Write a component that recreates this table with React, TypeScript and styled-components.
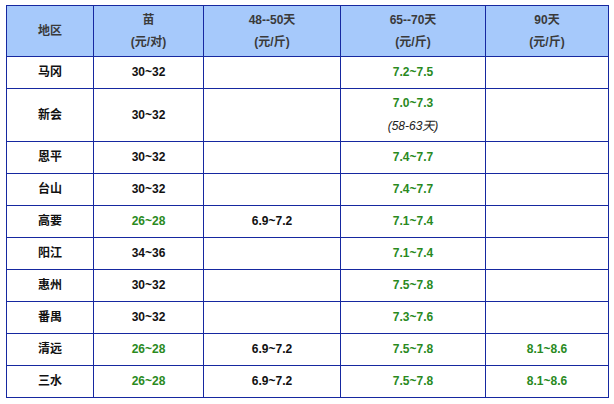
import { createGlobalStyle, styled } from 'styled-components';

const GlobalStyle = createGlobalStyle`
  html, body {
    margin: 0;
    padding: 0;
    background: #ffffff;
  }
  body {
    font-family: 'Liberation Sans', Arial, 'Noto Sans CJK SC', sans-serif;
  }
`;

const Page = styled.div`
  padding: 5px 6px;
`;

const Table = styled.table`
  border-collapse: collapse;
  width: 602px;
  table-layout: fixed;
  font-size: 12px;
  font-weight: bold;
`;

const HeadRow = styled.tr`
  height: 51px;
  background: #a6c9fb;
`;

const Row = styled.tr<{ $tall?: boolean }>`
  height: ${({ $tall }) => ($tall ? '53px' : '32px')};
`;

const HeadCell = styled.th`
  border: 1px solid #1628a0;
  color: #3a3a3a;
  font-weight: bold;
  line-height: 22px;
  text-align: center;
  padding: 0;
`;

const Cell = styled.td<{ $green?: boolean }>`
  border: 1px solid #1628a0;
  color: ${({ $green }) => ($green ? '#2a8a1e' : '#111111')};
  text-align: center;
  line-height: 23px;
  padding: 0;
`;

const Note = styled.span`
  display: block;
  font-style: italic;
  font-weight: normal;
  color: #222222;
`;

type RowData = {
  area: string;
  seed: string;
  seedGreen?: boolean;
  d48?: string;
  d65: string;
  note?: string;
  d90?: string;
};

const rows: RowData[] = [
  { area: '马冈', seed: '30~32', d65: '7.2~7.5' },
  { area: '新会', seed: '30~32', d65: '7.0~7.3', note: '(58-63天)' },
  { area: '恩平', seed: '30~32', d65: '7.4~7.7' },
  { area: '台山', seed: '30~32', d65: '7.4~7.7' },
  { area: '高要', seed: '26~28', seedGreen: true, d48: '6.9~7.2', d65: '7.1~7.4' },
  { area: '阳江', seed: '34~36', d65: '7.1~7.4' },
  { area: '惠州', seed: '30~32', d65: '7.5~7.8' },
  { area: '番禺', seed: '30~32', d65: '7.3~7.6' },
  { area: '清远', seed: '26~28', seedGreen: true, d48: '6.9~7.2', d65: '7.5~7.8', d90: '8.1~8.6' },
  { area: '三水', seed: '26~28', seedGreen: true, d48: '6.9~7.2', d65: '7.5~7.8', d90: '8.1~8.6' },
];

export default function App() {
  return (
    <Page>
      <GlobalStyle />
      <Table>
        <colgroup>
          <col style={{ width: 87 }} />
          <col style={{ width: 110 }} />
          <col style={{ width: 137 }} />
          <col style={{ width: 145 }} />
          <col style={{ width: 123 }} />
        </colgroup>
        <thead>
          <HeadRow>
            <HeadCell>地区</HeadCell>
            <HeadCell>
              苗<br />(元/对)
            </HeadCell>
            <HeadCell>
              48--50天<br />(元/斤)
            </HeadCell>
            <HeadCell>
              65--70天<br />(元/斤)
            </HeadCell>
            <HeadCell>
              90天<br />(元/斤)
            </HeadCell>
          </HeadRow>
        </thead>
        <tbody>
          {rows.map((r) => (
            <Row key={r.area} $tall={!!r.note}>
              <Cell>{r.area}</Cell>
              <Cell $green={r.seedGreen}>{r.seed}</Cell>
              <Cell>{r.d48}</Cell>
              <Cell $green>
                {r.d65}
                {r.note && <Note>{r.note}</Note>}
              </Cell>
              <Cell $green>{r.d90}</Cell>
            </Row>
          ))}
        </tbody>
      </Table>
    </Page>
  );
}
